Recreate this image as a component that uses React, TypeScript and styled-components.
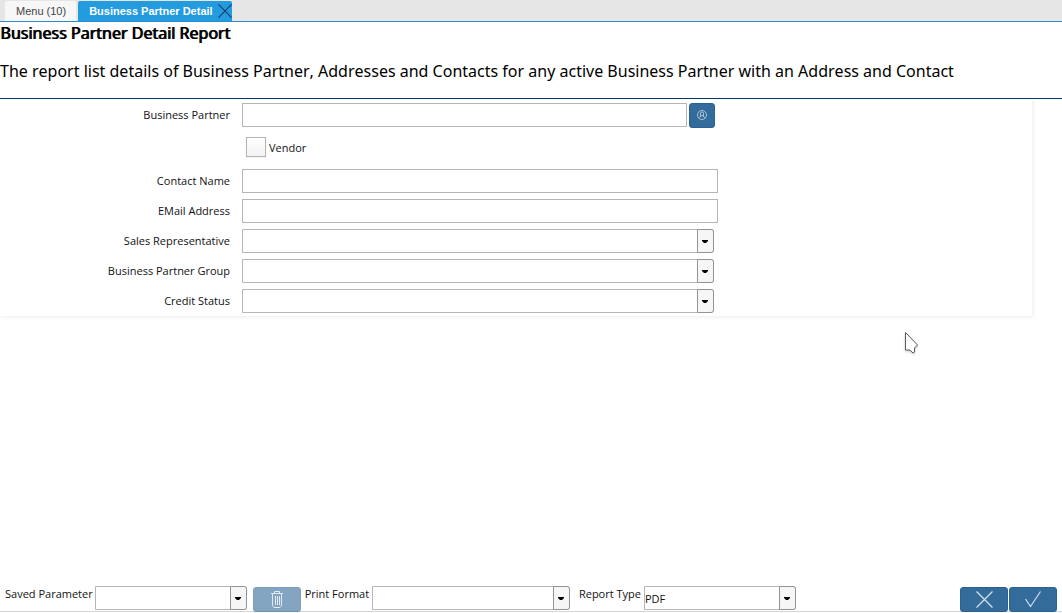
import React from 'react';
import styled, { createGlobalStyle, css } from 'styled-components';

const GlobalStyle = createGlobalStyle`
  *, *::before, *::after { box-sizing: border-box; }
  body {
    margin: 0;
    background: #fff;
    color: #111;
    font-family: "Open Sans", "Noto Sans", sans-serif;
    font-size: 11px;
    line-height: 16px;
  }
  button, input, select { font: inherit; color: inherit; margin: 0; }
`;

const Page = styled.div`
  min-height: 100vh;
  display: flex;
  flex-direction: column;
`;

const TabBar = styled.nav`
  display: flex;
  align-items: flex-end;
  gap: 2px;
  height: 22px;
  padding-left: 5px;
  background: #e6e6e6;
  border-bottom: 1px solid #2b8ccc;
`;

const Tab = styled.div<{ $active?: boolean }>`
  display: flex;
  align-items: center;
  height: 20px;
  padding-left: 11px;
  border-radius: 2px 2px 0 0;
  font-family: "Liberation Sans", sans-serif;
  background: ${(p) => (p.$active ? '#229bdf' : '#f7f7f7')};
  color: ${(p) => (p.$active ? '#fff' : '#444')};
  font-weight: ${(p) => (p.$active ? 700 : 400)};
  padding-right: ${(p) => (p.$active ? 0 : 10)}px;
`;

const TabLabel = styled.button`
  padding: 0;
  border: 0;
  background: none;
  cursor: pointer;
`;

const TabClose = styled.button`
  display: flex;
  margin-left: 5px;
  padding: 0;
  border: 0;
  background: none;
  color: #173a5c;
  cursor: pointer;
`;

const Header = styled.header`
  height: 77px;
  border-bottom: 1px solid #003764;
  color: #000;
  font-family: "Noto Sans", sans-serif;
  font-size: 16px;
  font-kerning: none;
  line-height: 22px;
`;

const Title = styled.h1`
  margin: 0 0 16px;
  font-size: 16px;
  font-weight: 400;
  line-height: 22px;
  text-shadow: 1px 0 0 #000;
`;

const Description = styled.p`
  margin: 0;
`;

const Panel = styled.main`
  display: grid;
  grid-template-columns: 230fr 476fr 302fr;
  column-gap: 12px;
  row-gap: 6px;
  margin-right: 30px;
  padding: 4px 0 3px;
  box-shadow: 1px 1px 4px rgba(0, 0, 0, 0.08);
  clip-path: inset(0 -8px -8px 0);
`;

const FieldLabel = styled.label`
  grid-column: 1;
  line-height: 24px;
  text-align: right;
`;

const Field = styled.div`
  grid-column: 2;
  display: flex;
  align-items: flex-start;
  gap: 2px;
`;

const CheckField = styled.div`
  grid-column: 2;
  display: flex;
  align-items: center;
  gap: 3px;
  height: 29px;
  padding: 0 0 3px 4px;
`;

const CheckLabel = styled.label`
  padding-top: 2px;
`;

const TextInput = styled.input`
  flex: 1;
  min-width: 0;
  height: 24px;
  padding: 0 4px;
  border: 1px solid #b5b5b5;
  border-radius: 0;
  background: #fff;
`;

const CheckBox = styled.input`
  appearance: none;
  width: 20px;
  height: 20px;
  border: 1px solid #b5b5b5;
  background: linear-gradient(#fff, #f2f2f2);
  box-shadow: 0 1px 2px rgba(0, 0, 0, 0.06);
  &:checked { background: #336b9b; }
`;

const blueButton = css`
  display: flex;
  align-items: center;
  justify-content: center;
  height: 25px;
  padding: 0;
  border: 1px solid #2a6294;
  border-radius: 3px;
  background: #336b9b;
  color: #d3e0ec;
  cursor: pointer;
`;

const LookupButton = styled.button`
  ${blueButton}
  width: 26px;
  margin-right: 3px;
  color: #a9c0d6;
`;

const ActionButton = styled.button`
  ${blueButton}
  width: 48px;
  margin-top: 1px;
  &:disabled { opacity: 0.6; cursor: default; }
`;

const ComboBox = styled.div<{ $width?: number }>`
  display: grid;
  grid-template-columns: minmax(0, 1fr) 17px;
  height: 24px;
  ${(p) => (p.$width ? `width: ${p.$width}px;` : 'flex: 1; margin-right: 4px;')}
`;

const ComboSelect = styled.select`
  appearance: none;
  grid-area: 1 / 1 / 2 / 3;
  padding: 1px 18px 0 0;
  border: 1px solid #b5b5b5;
  border-radius: 0 3px 3px 0;
  background: #fff;
`;

const ComboArrow = styled.span`
  grid-area: 1 / 2 / 2 / 3;
  display: flex;
  align-items: center;
  justify-content: center;
  padding-right: 1px;
  border: 1px solid #939393;
  border-radius: 0 3px 3px 0;
  background: #f6f6f6;
  color: #000;
  pointer-events: none;
`;

const Footer = styled.footer`
  display: flex;
  align-items: flex-start;
  justify-content: space-between;
  height: 27px;
  margin-top: auto;
  padding: 0 5px;
  background: linear-gradient(#d6d6d6, #d6d6d6) 0 25px / 100% 1px no-repeat;
`;

const FooterGroup = styled.div<{ $gap: number }>`
  display: flex;
  align-items: flex-start;
  gap: ${(p) => p.$gap}px;
`;

const Parameters = styled(FooterGroup)`
  flex: 0 1 791px;
  justify-content: space-between;
`;

const FooterLabel = styled.label`
  white-space: nowrap;
`;

const Pointer = styled.svg`
  position: absolute;
  left: 904px;
  top: 331px;
  pointer-events: none;
  filter: drop-shadow(0 1px 1px rgba(0, 0, 0, 0.25));
`;

const Cross = ({ size }: { size: number }) => (
  <svg width={size} height={size} viewBox="0 0 16 16" fill="none" stroke="currentColor" strokeWidth="1.2" aria-hidden="true">
    <path d="M0.5 0.5 15.5 15.5M15.5 0.5 0.5 15.5" />
  </svg>
);

const Check = () => (
  <svg width="18" height="17" viewBox="0 0 18 17" fill="none" stroke="currentColor" strokeWidth="1.2" aria-hidden="true">
    <path d="M1.5 8 6.5 15.5 16.5 0.5" />
  </svg>
);

const Trash = () => (
  <svg width="14" height="17" viewBox="0 0 14 17" fill="none" stroke="currentColor" strokeWidth="1" aria-hidden="true">
    <path d="M1 2.5H13M4.5 2.5V0.5H9.5V2.5M2.5 3V14.5L4 16.5H10L11.5 14.5V3M5.5 5V14M7.5 5V14M9.5 5V14" />
  </svg>
);

const Person = () => (
  <svg width="12" height="11" viewBox="0 0 12 11" fill="none" stroke="currentColor" strokeWidth="1" aria-hidden="true">
    <circle cx="6" cy="5" r="4.5" />
    <path d="M4.5 7V3Q4.5 2 6 2T7.5 3V7M4.5 5Q6 7 7.5 5M2.5 8 4.5 6.5M9.5 8 7.5 6.5" />
  </svg>
);

const Combo = ({ id, width, options = [''] }: { id: string; width?: number; options?: string[] }) => (
  <ComboBox $width={width}>
    <ComboSelect id={id}>
      {options.map((o) => (
        <option key={o}>{o}</option>
      ))}
    </ComboSelect>
    <ComboArrow>
      <svg width="6" height="4" viewBox="0 0 6 4" aria-hidden="true">
        <path d="M0 1H6V2L4 4H2L0 2Z" fill="currentColor" />
      </svg>
    </ComboArrow>
  </ComboBox>
);

export default function App() {
  return (
    <Page>
      <GlobalStyle />
      <TabBar>
        <Tab>
          <TabLabel>Menu (10)</TabLabel>
        </Tab>
        <Tab $active>
          <TabLabel>Business Partner Detail</TabLabel>
          <TabClose aria-label="Close tab">
            <Cross size={14} />
          </TabClose>
        </Tab>
      </TabBar>
      <Header>
        <Title>Business Partner Detail Report</Title>
        <Description>
          The report list details of Business Partner, Addresses and Contacts for any active Business Partner with an
          Address and Contact
        </Description>
      </Header>
      <Panel>
        <FieldLabel htmlFor="partner">Business Partner</FieldLabel>
        <Field>
          <TextInput id="partner" />
          <LookupButton aria-label="Find business partner">
            <Person />
          </LookupButton>
        </Field>
        <CheckField>
          <CheckBox type="checkbox" id="vendor" />
          <CheckLabel htmlFor="vendor">Vendor</CheckLabel>
        </CheckField>
        <FieldLabel htmlFor="contact">Contact Name</FieldLabel>
        <Field>
          <TextInput id="contact" />
        </Field>
        <FieldLabel htmlFor="email">EMail Address</FieldLabel>
        <Field>
          <TextInput id="email" />
        </Field>
        <FieldLabel htmlFor="rep">Sales Representative</FieldLabel>
        <Field>
          <Combo id="rep" />
        </Field>
        <FieldLabel htmlFor="group">Business Partner Group</FieldLabel>
        <Field>
          <Combo id="group" />
        </Field>
        <FieldLabel htmlFor="credit">Credit Status</FieldLabel>
        <Field>
          <Combo id="credit" />
        </Field>
      </Panel>
      <Footer>
        <Parameters $gap={6}>
          <FooterGroup $gap={4}>
            <FooterGroup $gap={6}>
              <FooterGroup $gap={2}>
                <FooterLabel htmlFor="saved">Saved Parameter</FooterLabel>
                <Combo id="saved" width={152} />
              </FooterGroup>
              <ActionButton disabled aria-label="Delete saved parameter">
                <Trash />
              </ActionButton>
            </FooterGroup>
            <FooterGroup $gap={3}>
              <FooterLabel htmlFor="format">Print Format</FooterLabel>
              <Combo id="format" width={198} />
            </FooterGroup>
          </FooterGroup>
          <FooterGroup $gap={3}>
            <FooterLabel htmlFor="type">Report Type</FooterLabel>
            <Combo id="type" width={152} options={['PDF', 'HTML', 'Excel']} />
          </FooterGroup>
        </Parameters>
        <FooterGroup $gap={1}>
          <ActionButton aria-label="Cancel">
            <Cross size={17} />
          </ActionButton>
          <ActionButton aria-label="OK">
            <Check />
          </ActionButton>
        </FooterGroup>
      </Footer>
      <Pointer width="16" height="24" viewBox="0 0 16 24" aria-hidden="true">
        <path d="M1.5 1.5V19H6L9 22 10.5 21V17L13.5 14Z" fill="#fff" stroke="#5c5c5c" />
      </Pointer>
    </Page>
  );
}
